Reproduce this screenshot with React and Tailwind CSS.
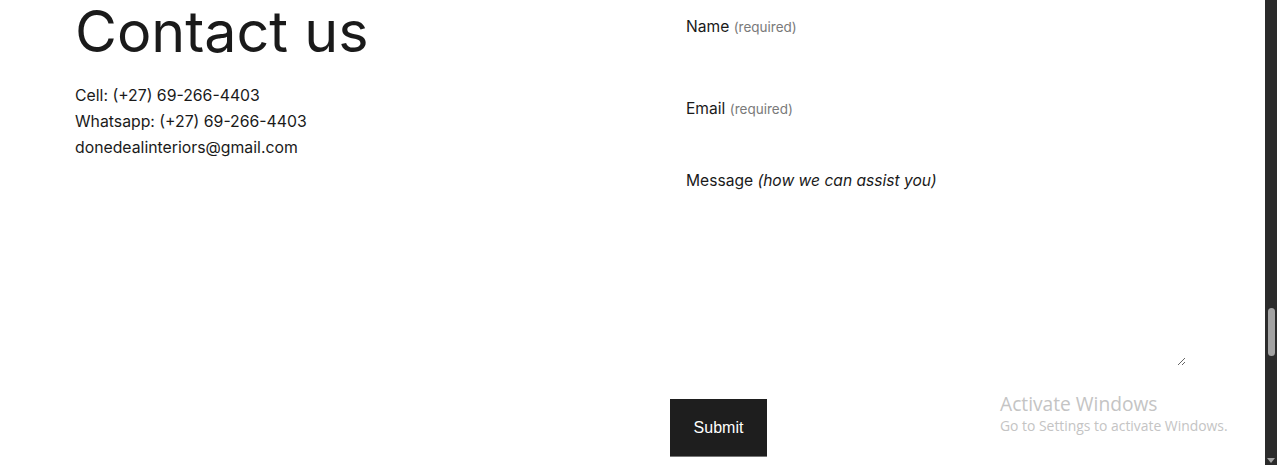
import { useState } from 'react';

const App = () => {
  const [form, setForm] = useState({ name: '', email: '', message: '' });

  return (
    <div className="relative h-[465px] w-[1277px] overflow-hidden bg-white text-[#1a1a1a] font-['Inter',sans-serif]">
      <div className="flex h-full pr-3">
        {/* Left */}
        <div className="w-[670px] shrink-0 pl-[75px]">
          <h1 className="mt-[-5px] text-[57.4px] leading-[72px] font-normal">Contact us</h1>
          <div className="mt-[16px] text-[15.8px] leading-[26px]">
            <p>Cell: (+27) 69-266-4403</p>
            <p>Whatsapp: (+27) 69-266-4403</p>
            <p>donedealinteriors@gmail.com</p>
          </div>
        </div>

        {/* Form */}
        <form className="flex-1 flex flex-col pt-[16px]" onSubmit={(e) => e.preventDefault()}>
          <div className="pl-4 pr-[79px]">
            <label className="block text-[15.6px] leading-[22px]">
              Name <span className="text-[13.5px] text-[#7a7a7a]">(required)</span>
            </label>
            <input
              className="block w-full h-[52px] outline-none bg-transparent"
              value={form.name}
              onChange={(e) => setForm({ ...form, name: e.target.value })}
            />
            <label className="mt-[8px] block text-[15.6px] leading-[22px]">
              Email <span className="text-[13.5px] text-[#7a7a7a]">(required)</span>
            </label>
            <input
              className="block w-full h-[40px] outline-none bg-transparent"
              value={form.email}
              onChange={(e) => setForm({ ...form, email: e.target.value })}
            />
            <label className="mt-[10px] block text-[15.6px] leading-[22px]">
              Message <em className="italic">(how we can assist you)</em>
            </label>
            <textarea
              className="block w-full h-[174px] outline-none bg-transparent resize-y"
              value={form.message}
              onChange={(e) => setForm({ ...form, message: e.target.value })}
            />
          </div>
          <div className="mt-[33px]">
            <button
              type="submit"
              className="h-[58px] w-[97px] bg-[#1e1e1e] text-white text-[16px] border-b border-[#777] font-['Liberation_Sans',Arial,sans-serif]"
            >
              Submit
            </button>
          </div>
        </form>
      </div>

      {/* Windows watermark */}
      <div className="absolute left-[1000px] top-[391px] text-[#c4c4c4] font-['Open_Sans','Noto_Sans',sans-serif]">
        <div className="text-[19.2px] leading-[26px]">Activate Windows</div>
        <div className="text-[13.9px] leading-[20px] mt-[-1px]">Go to Settings to activate Windows.</div>
      </div>

      {/* Scrollbar */}
      <div className="absolute right-0 top-0 h-full w-3 bg-[#2b2b2b]">
        <div className="absolute left-[3px] top-[308px] h-[48px] w-[7px] rounded-full bg-[#a3a3a3]" />
        <div className="absolute bottom-[2px] left-[2px] h-0 w-0 border-l-[4px] border-r-[4px] border-t-[5px] border-l-transparent border-r-transparent border-t-[#a3a3a3]" />
      </div>
    </div>
  );
};

export default App;
